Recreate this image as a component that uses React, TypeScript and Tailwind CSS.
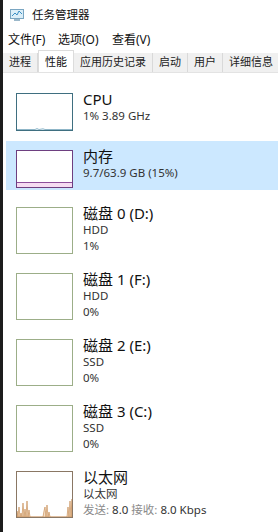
import React from "react";

const font = { fontFamily: '"Noto Sans", "Noto Sans CJK SC", sans-serif' };

function Chart({ kind, tall }: { kind: string; tall?: boolean }) {
  const h = tall ? 47 : 38;
  const border =
    kind === "cpu" ? "#3f6f80" : kind === "mem" ? "#6e3f80" : kind === "disk" ? "#9cae88" : "#8a7764";
  return (
    <div
      className="relative shrink-0 w-[57px] bg-white border"
      style={{ height: h, borderColor: border }}
    >
      {kind === "cpu" && (
        <svg className="absolute left-0 bottom-0" width="55" height="4" viewBox="0 0 55 4">
          <path d="M0 3.5 L18 3.5 L20 2.6 L22 3.5 L26 2.8 L28 3.5 L55 3.5" stroke="#8fb6c8" strokeWidth="1" fill="#d6ecf6" />
        </svg>
      )}
      {kind === "mem" && (
        <div className="absolute left-0 right-0 bottom-0 h-[5px] bg-[#f6dcf2] border-t border-[#8e4f9c]" />
      )}
      {kind === "net" && (
        <svg className="absolute left-0 bottom-0" width="55" height="22" viewBox="0 0 55 22">
          <path
            d="M0 22 L0 16 L1 22 L2 12 L3 22 L4 18 L5 22 L6 8 L7 22 L8 14 L9 22 L10 6 L11 22 L12 15 L13 22 L26 22 L27 16 L28 12 L29 22 L30 10 L31 22 L32 17 L33 22 L50 22 L51 12 L52 22 L53 6 L54 22 L55 4 L55 22 Z"
            fill="#f5dfc6"
            stroke="#c9905a"
            strokeWidth="0.7"
          />
        </svg>
      )}
    </div>
  );
}

function Row({
  kind,
  title,
  lines,
  selected,
  tall,
}: {
  kind: string;
  title: string;
  lines: React.ReactNode[];
  selected?: boolean;
  tall?: boolean;
}) {
  return (
    <div
      className={`flex pl-[10px] pt-[9px] ${tall ? "h-[58px]" : "h-[49px]"} ${selected ? "bg-[#cce8ff]" : ""}`}
    >
      <Chart kind={kind} tall={tall} />
      <div className="ml-[10px] -mt-[3px] flex flex-col">
        <div className="text-[15px] leading-[18px] text-[#111]">{title}</div>
        {lines.map((l, i) => (
          <div key={i} className="text-[11.5px] leading-[16px] text-[#333]">
            {l}
          </div>
        ))}
      </div>
    </div>
  );
}

function AppIcon() {
  return (
    <svg width="14" height="13" viewBox="0 0 14 13">
      <rect x="0.5" y="0.5" width="13" height="9" fill="#dbeef8" stroke="#7aa6c2" />
      <path d="M2 7 L5 4 L7 6 L9 2 L12 5" stroke="#3b8fc4" strokeWidth="1" fill="none" />
      <rect x="4" y="10" width="6" height="2" fill="#9bb8ca" />
    </svg>
  );
}

export default function App() {
  const tabs = ["进程", "性能", "应用历史记录", "启动", "用户", "详细信息"];
  return (
    <div className="w-[278px] h-[532px] flex bg-white overflow-hidden" style={font}>
      <div className="w-[3px] shrink-0 bg-[#1c1c1c]" />
      <div className="flex-1 flex flex-col min-w-0">
        <div className="h-[30px] flex items-center pl-[7px] gap-[8px]">
          <AppIcon />
          <span className="text-[11.5px] text-[#111]">任务管理器</span>
        </div>
        <div className="h-[20px] flex items-center pl-[5px] text-[12px] text-[#111]">
          <span className="w-[50px]">文件(F)</span>
          <span className="w-[54px]">选项(O)</span>
          <span>查看(V)</span>
        </div>
        <div className="h-[23px] flex items-end border-b border-[#e3e3e3] whitespace-nowrap overflow-hidden">
          {tabs.map((t, i) =>
            i === 1 ? (
              <div
                key={t}
                className="shrink-0 h-[23px] -mb-px px-[6px] flex items-center bg-white border-x border-t border-[#dcdcdc] text-[11px] text-[#111]"
              >
                {t}
              </div>
            ) : (
              <div
                key={t}
                className="shrink-0 h-[19px] px-[6px] flex items-center bg-[#f0f0f0] border-r border-[#d9d9d9] text-[11px] text-[#222]"
              >
                {t}
              </div>
            )
          )}
        </div>
        <div className="flex flex-col gap-[8px] pt-[11px] pl-[3px]">
          <Row kind="cpu" title="CPU" lines={["1% 3.89 GHz"]} />
          <Row kind="mem" title="内存" lines={["9.7/63.9 GB (15%)"]} selected />
          <Row kind="disk" title="磁盘 0 (D:)" lines={["HDD", "1%"]} tall />
          <Row kind="disk" title="磁盘 1 (F:)" lines={["HDD", "0%"]} tall />
          <Row kind="disk" title="磁盘 2 (E:)" lines={["SSD", "0%"]} tall />
          <Row kind="disk" title="磁盘 3 (C:)" lines={["SSD", "0%"]} tall />
          <Row
            kind="net"
            title="以太网"
            lines={[
              "以太网",
              <span>
                <span className="text-[#8a8a8a]">发送:</span> 8.0 <span className="text-[#8a8a8a]">接收:</span> 8.0 Kbps
              </span>,
            ]}
            tall
          />
        </div>
      </div>
    </div>
  );
}
